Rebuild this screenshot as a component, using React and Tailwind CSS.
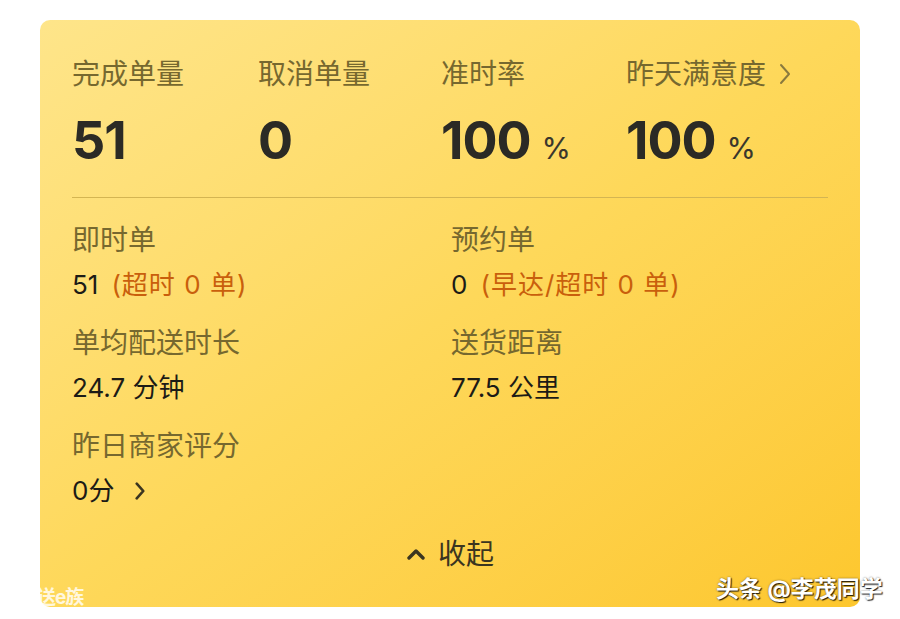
import React from 'react';

const FONT = 'font-["Inter","Noto_Sans_CJK_SC",sans-serif]';

const topStats = [
  { label: '完成单量', value: '51' },
  { label: '取消单量', value: '0' },
  { label: '准时率', value: '100', unit: '%' },
  { label: '昨天满意度', value: '100', unit: '%', link: true },
];

const details = [
  { label: '即时单', value: '51', note: '(超时 0 单)' },
  { label: '预约单', value: '0', note: '(早达/超时 0 单)' },
  { label: '单均配送时长', value: '24.7 分钟' },
  { label: '送货距离', value: '77.5 公里' },
  { label: '昨日商家评分', value: '0分', arrow: true },
];

const Chevron = ({ className, stroke = 2.4 }) => (
  <svg className={className} viewBox="0 0 12 22" fill="none" stroke="currentColor" strokeWidth={stroke} strokeLinecap="round" strokeLinejoin="round">
    <path d="M2 2l8 9-8 9" />
  </svg>
);

export default function App() {
  return (
    <div className={`${FONT} relative w-[900px] h-[619px] bg-white pt-[20px] px-[40px]`}>
      <div className="h-[587px] rounded-[10px] bg-linear-to-br from-[#fee58a] via-[#fed85a] to-[#fdc72d] pt-[36px] pl-[32px] pr-[32px]">
        {/* headline numbers */}
        <div className="grid grid-cols-[186px_183px_185px_1fr]">
          {topStats.map((s) => (
            <div key={s.label}>
              <div className="flex items-center gap-[13px] h-[36px] text-[28px] leading-[36px] text-[#76682f]">
                {s.label}
                {s.link && <Chevron className="w-[12px] h-[22px] text-[#8a7a3e]" stroke={2} />}
              </div>
              <div className="mt-[19px] flex items-baseline h-[60px] leading-[60px]">
                <span className="text-[52px] font-bold tracking-[-1px] text-[#2b2a25]">{s.value}</span>
                {s.unit && <span className="ml-[11px] text-[30px] text-[#3a372c]">{s.unit}</span>}
              </div>
            </div>
          ))}
        </div>

        <div className="mt-[26px] h-px bg-[#d4b552]" />

        {/* breakdown */}
        <div className="mt-[24px] grid grid-cols-[379px_1fr] gap-y-[23px]">
          {details.map((d) => (
            <div key={d.label}>
              <div className="h-[36px] text-[28px] leading-[36px] text-[#76682f]">{d.label}</div>
              <div className="mt-[10px] flex items-center h-[34px] text-[26px] leading-[34px] text-[#1c1b16]">
                <span>{d.value}</span>
                {d.note && <span className="ml-[13px] tracking-[1px] text-[#c95f0c]">{d.note}</span>}
                {d.arrow && <Chevron className="ml-[20px] w-[12px] h-[18px] text-[#3b3520]" stroke={3.2} />}
              </div>
            </div>
          ))}
        </div>

        <div className="mt-[28px] flex items-center justify-center gap-[12px] h-[36px] text-[28px] leading-[36px] text-[#3b3520]">
          <svg className="w-[20px] h-[12px]" viewBox="0 0 20 12" fill="none" stroke="currentColor" strokeWidth={3.4} strokeLinecap="round" strokeLinejoin="round">
            <path d="M3 10l7-7 7 7" />
          </svg>
          收起
        </div>
      </div>

      <div className="absolute left-[37px] top-[584px] text-[19px] font-bold text-white/80 tracking-[-1px]">送e族</div>
      <div className="absolute left-[716px] top-[572px] text-[23px] font-bold text-white [text-shadow:1px_1px_1px_rgba(0,0,0,0.85),0_0_2px_rgba(0,0,0,0.5)]">
        头条 @李茂同学
      </div>
    </div>
  );
}
